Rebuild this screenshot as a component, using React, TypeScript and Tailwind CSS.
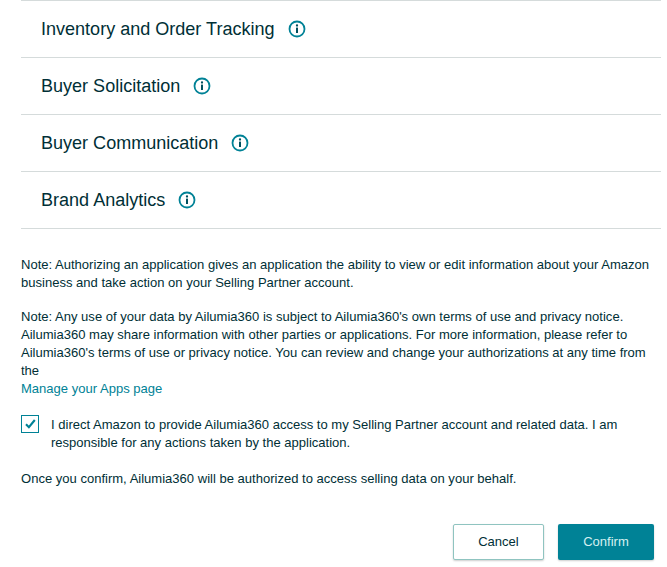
const Info = () => (
  <svg width="18" height="18" viewBox="0 0 18 18" fill="none" className="ml-[13px] shrink-0">
    <circle cx="9" cy="9" r="7.5" stroke="#008296" strokeWidth="1.8" />
    <circle cx="9" cy="5.5" r="1.15" fill="#00505e" />
    <rect x="8" y="7.6" width="2" height="5.4" fill="#00505e" />
  </svg>
);

const rows = ["Inventory and Order Tracking", "Buyer Solicitation", "Buyer Communication", "Brand Analytics"];

export default function App() {
  return (
    <div className="h-[567px] w-[667px] overflow-hidden bg-white font-['Liberation_Sans',Arial,sans-serif] text-[#002f36]">
      <div className="ml-[21px] mr-[6px] border-t border-[#d5dbdb]">
        {rows.map((r) => (
          <div key={r} className="flex h-[57px] items-center border-b border-[#d5dbdb] pl-5">
            <span className="text-[18.04px] leading-[24px]">{r}</span>
            <Info />
          </div>
        ))}
      </div>
      <div className="ml-[21px] mr-[16px] mt-[27px] text-[13.04px] leading-[18px]">
        <p>Note: Authorizing an application gives an application the ability to view or edit information about your Amazon business and take action on your Selling Partner account.</p>
        <p className="mt-[16px]">
          Note: Any use of your data by Ailumia360 is subject to Ailumia360's own terms of use and privacy notice. Ailumia360 may share information with other parties or applications. For more information, please refer to Ailumia360's terms of use or privacy notice. You can review and change your authorizations at any time from the
          <br />
          <span className="text-[#008296]">Manage your Apps page</span>
        </p>
        <div className="mt-[18px] flex">
          <div className="-mt-px flex h-[18px] w-[18px] shrink-0 items-center justify-center border border-[#008296]">
            <svg width="11" height="10" viewBox="0 0 11 10" fill="none">
              <path d="M1 5.2 3.9 8.2 9.8 1" stroke="#008296" strokeWidth="2.1" />
            </svg>
          </div>
          <p className="ml-3">I direct Amazon to provide Ailumia360 access to my Selling Partner account and related data. I am responsible for any actions taken by the application.</p>
        </div>
        <p className="mt-[18px]">Once you confirm, Ailumia360 will be authorized to access selling data on your behalf.</p>
      </div>
      <div className="mr-[13px] mt-[36px] flex justify-end gap-[14px] text-[13.04px]">
        <button className="h-[36px] w-[91px] rounded-[2px] border border-[#8fc4c0] bg-white text-[#002f36] shadow-[0_1px_2px_rgba(0,0,0,0.2)]">Cancel</button>
        <button className="h-[36px] w-[96px] rounded-[2px] bg-[#008296] text-[#d5f0f0] shadow-[0_1px_2px_rgba(0,0,0,0.2)]">Confirm</button>
      </div>
    </div>
  );
}
